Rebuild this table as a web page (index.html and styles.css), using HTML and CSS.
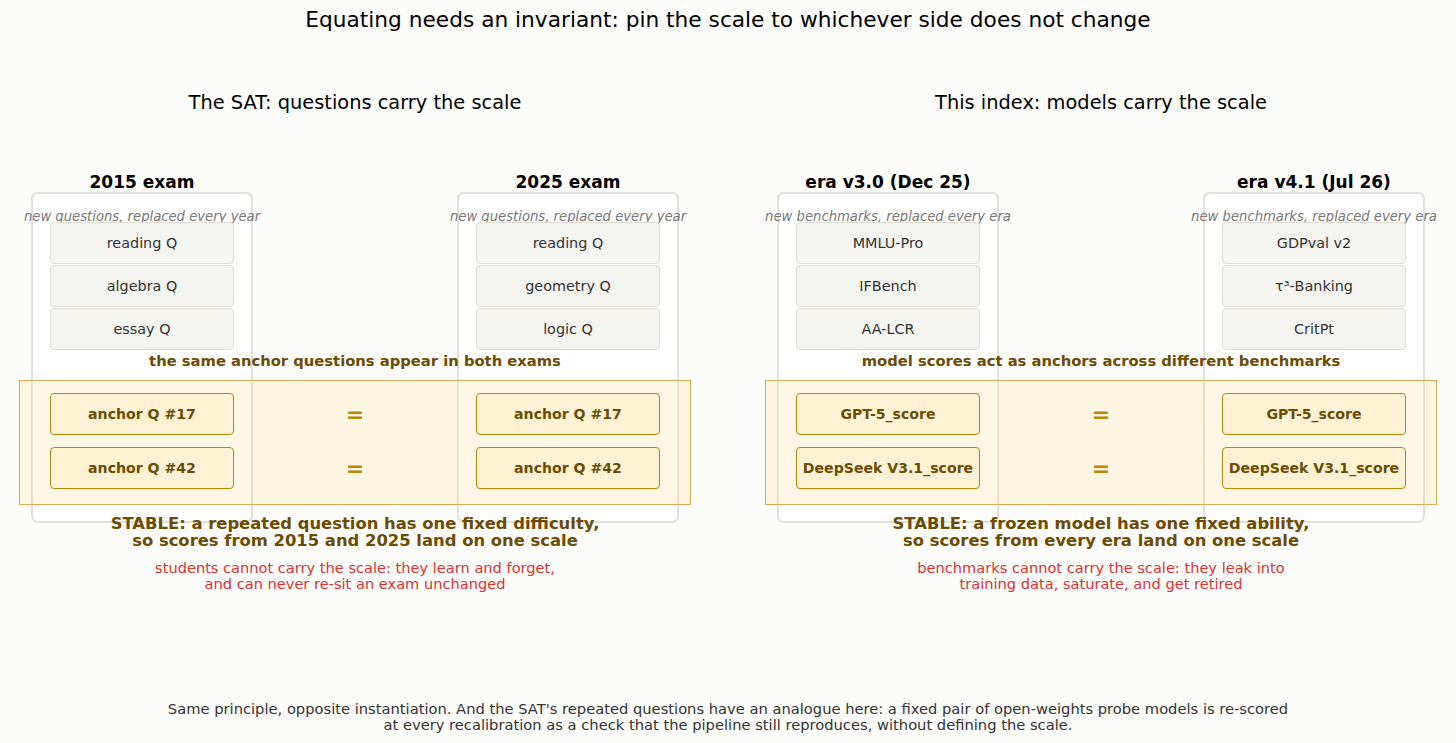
FILE: index.html
```html
<!DOCTYPE html>
<html lang="en">
<head>
<meta charset="utf-8">
<title>Equating needs an invariant</title>
<link rel="stylesheet" href="styles.css">
</head>
<body>
<div class="fig">
  <h1 class="title">Equating needs an invariant: pin the scale to whichever side does not change</h1>
  <div class="panels">
    <section class="panel">
      <h2 class="panel-title">The SAT: questions carry the scale</h2>
      <div class="board">
        <div class="frame frame-l"></div>
        <div class="frame frame-r"></div>
        <h3 class="col-title col-l">2015 exam</h3>
        <h3 class="col-title col-r">2025 exam</h3>
        <p class="sub col-l">new questions, replaced every year</p>
        <p class="sub col-r">new questions, replaced every year</p>
        <div class="items items-l">
          <div class="item">reading Q</div>
          <div class="item">algebra Q</div>
          <div class="item">essay Q</div>
        </div>
        <div class="items items-r">
          <div class="item">reading Q</div>
          <div class="item">geometry Q</div>
          <div class="item">logic Q</div>
        </div>
        <p class="caption">the same anchor questions appear in both exams</p>
        <div class="band"></div>
        <div class="anchors anchors-l">
          <div class="anchor">anchor Q #17</div>
          <div class="anchor">anchor Q #42</div>
        </div>
        <div class="equals">
          <div class="eq">=</div>
          <div class="eq">=</div>
        </div>
        <div class="anchors anchors-r">
          <div class="anchor">anchor Q #17</div>
          <div class="anchor">anchor Q #42</div>
        </div>
        <div class="verdict">
          <p class="stable">STABLE: a repeated question has one fixed difficulty,<br>so scores from 2015 and 2025 land on one scale</p>
          <p class="fail">students cannot carry the scale: they learn and forget,<br>and can never re-sit an exam unchanged</p>
        </div>
      </div>
    </section>
    <section class="panel">
      <h2 class="panel-title">This index: models carry the scale</h2>
      <div class="board">
        <div class="frame frame-l"></div>
        <div class="frame frame-r"></div>
        <h3 class="col-title col-l">era v3.0 (Dec 25)</h3>
        <h3 class="col-title col-r">era v4.1 (Jul 26)</h3>
        <p class="sub col-l">new benchmarks, replaced every era</p>
        <p class="sub col-r">new benchmarks, replaced every era</p>
        <div class="items items-l">
          <div class="item">MMLU-Pro</div>
          <div class="item">IFBench</div>
          <div class="item">AA-LCR</div>
        </div>
        <div class="items items-r">
          <div class="item">GDPval v2</div>
          <div class="item">τ³-Banking</div>
          <div class="item">CritPt</div>
        </div>
        <p class="caption">model scores act as anchors across different benchmarks</p>
        <div class="band"></div>
        <div class="anchors anchors-l">
          <div class="anchor">GPT-5_score</div>
          <div class="anchor">DeepSeek V3.1_score</div>
        </div>
        <div class="equals">
          <div class="eq">=</div>
          <div class="eq">=</div>
        </div>
        <div class="anchors anchors-r">
          <div class="anchor">GPT-5_score</div>
          <div class="anchor">DeepSeek V3.1_score</div>
        </div>
        <div class="verdict">
          <p class="stable">STABLE: a frozen model has one fixed ability,<br>so scores from every era land on one scale</p>
          <p class="fail">benchmarks cannot carry the scale: they leak into<br>training data, saturate, and get retired</p>
        </div>
      </div>
    </section>
  </div>
  <p class="footer">Same principle, opposite instantiation. And the SAT's repeated questions have an analogue here: a fixed pair of open-weights probe models is re-scored<br>at every recalibration as a check that the pipeline still reproduces, without defining the scale.</p>
</div>
</body>
</html>
```
FILE: styles.css
```css
html, body {
  margin: 0;
  padding: 0;
  background: #fcfcfa;
}
body {
  font-family: "DejaVu Sans", "Liberation Sans", sans-serif;
  color: #000;
}
.fig {
  width: 1456px;
  height: 743px;
  overflow: hidden;
}
.title {
  margin: 0;
  padding-top: 8px;
  font-size: 21.7px;
  line-height: 24px;
  font-weight: normal;
  text-align: center;
}
.panels {
  display: flex;
  gap: 74px;
  padding-left: 19px;
  margin-top: 59px;
}
.panel {
  width: 672px;
}
.panel-title {
  margin: 0 0 45px;
  font-size: 19.4px;
  line-height: 24px;
  font-weight: normal;
  text-align: center;
}
.board {
  display: grid;
  grid-template-columns: 12px 19px 184px 19px 1fr 19px 184px 19px 12px;
  grid-template-rows: 32px 30px 128px 30px 125px 18px auto;
}
.frame {
  grid-row: 2 / 7;
  background: #fff;
  border: 2px solid #e0dfda;
  border-radius: 7px;
}
.frame-l { grid-column: 2 / 5; }
.frame-r { grid-column: 6 / 9; }
.col-l { grid-column: 2 / 5; }
.col-r { grid-column: 6 / 9; }
.col-title {
  grid-row: 1;
  align-self: end;
  margin: 0;
  font-size: 17px;
  line-height: 20px;
  font-weight: bold;
  text-align: center;
}
.sub {
  grid-row: 2;
  align-self: end;
  margin: 0 -40px -3px;
  font-size: 13.2px;
  line-height: 16px;
  font-style: italic;
  color: #777;
  text-align: center;
  white-space: nowrap;
}
.items {
  grid-row: 3;
  display: flex;
  flex-direction: column;
  gap: 1px;
  z-index: 1;
}
.items-l { grid-column: 3; }
.items-r { grid-column: 7; }
.item {
  height: 42px;
  box-sizing: border-box;
  display: flex;
  align-items: center;
  justify-content: center;
  background: #f4f4f0;
  border: 1.5px solid #dedcd5;
  border-radius: 4px;
  font-size: 14.4px;
  color: #333;
}
.caption {
  grid-row: 4;
  grid-column: 1 / -1;
  align-self: start;
  margin: 3px 0 0;
  font-size: 14.75px;
  line-height: 16px;
  font-weight: bold;
  color: #6b4c02;
  text-align: center;
}
.band {
  grid-row: 5;
  grid-column: 1 / -1;
  background: rgba(250, 225, 150, 0.25);
  border: 1px solid #d6ad55;
  z-index: 2;
}
.anchors, .equals {
  grid-row: 5;
  display: flex;
  flex-direction: column;
  gap: 12px;
  padding-top: 13px;
  z-index: 3;
}
.anchors-l { grid-column: 3; }
.anchors-r { grid-column: 7; }
.equals { grid-column: 5; }
.anchor {
  height: 42px;
  box-sizing: border-box;
  display: flex;
  align-items: center;
  justify-content: center;
  background: #fff2d4;
  border: 1.5px solid #b8860b;
  border-radius: 4px;
  font-size: 14.1px;
  font-weight: bold;
  color: #6b4c02;
}
.eq {
  height: 42px;
  display: flex;
  align-items: center;
  justify-content: center;
  font-size: 22px;
  font-weight: bold;
  color: #b8860b;
}
.verdict {
  grid-row: 6 / 8;
  grid-column: 1 / -1;
  padding-top: 10px;
  text-align: center;
  z-index: 4;
}
.stable {
  margin: 0;
  font-size: 16.4px;
  line-height: 17px;
  font-weight: bold;
  color: #6b4c02;
}
.fail {
  margin: 11px 0 0;
  font-size: 14.6px;
  line-height: 16px;
  color: #e03030;
}
.footer {
  margin: 109px 0 0;
  font-size: 14.7px;
  line-height: 16px;
  color: #333;
  text-align: center;
}
```
